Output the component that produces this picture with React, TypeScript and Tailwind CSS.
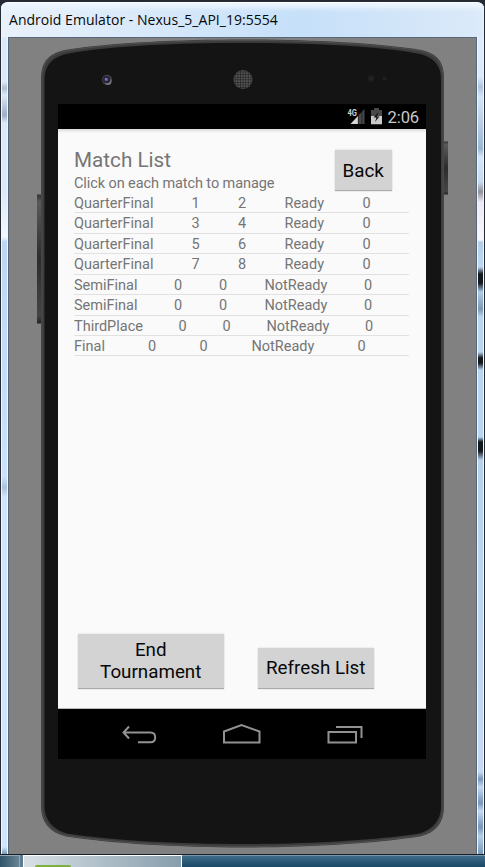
import React from "react";

type Match = { cells: string[]; widths: string[] };

const quarter = ["w-[117.5px]", "w-[46.5px]", "w-[46.5px]", "w-[78px]", "w-[12px]"];
const semi = ["w-[100px]", "w-[45px]", "w-[45.5px]", "w-[99.5px]", "w-[12px]"];
const third = ["w-[104.5px]", "w-[44px]", "w-[44px]", "w-[98.500px]", "w-[12px]"];
const final = ["w-[74px]", "w-[51.5px]", "w-[52px]", "w-[106px]", "w-[12px]"];

const matches: Match[] = [
  { cells: ["QuarterFinal", "1", "2", "Ready", "0"], widths: quarter },
  { cells: ["QuarterFinal", "3", "4", "Ready", "0"], widths: quarter },
  { cells: ["QuarterFinal", "5", "6", "Ready", "0"], widths: quarter },
  { cells: ["QuarterFinal", "7", "8", "Ready", "0"], widths: quarter },
  { cells: ["SemiFinal", "0", "0", "NotReady", "0"], widths: semi },
  { cells: ["SemiFinal", "0", "0", "NotReady", "0"], widths: semi },
  { cells: ["ThirdPlace", "0", "0", "NotReady", "0"], widths: third },
  { cells: ["Final", "0", "0", "NotReady", "0"], widths: final },
];

function PhoneBody() {
  return (
    <svg className="absolute inset-0 h-full w-full" viewBox="8 37 469 817">
      <defs>
        <linearGradient id="key" x1="0" y1="0" x2="0" y2="1">
          <stop offset="0" stopColor="#333" />
          <stop offset="0.06" stopColor="#5a5a5a" />
          <stop offset="0.5" stopColor="#2c2c2c" />
          <stop offset="0.94" stopColor="#454545" />
          <stop offset="1" stopColor="#222" />
        </linearGradient>
        <pattern id="mesh" width="2.6" height="2.6" patternUnits="userSpaceOnUse">
          <rect width="2.6" height="2.6" fill="#555" />
          <circle cx="1.3" cy="1.3" r="0.9" fill="#151515" />
        </pattern>
      </defs>
      <rect x="37" y="194" width="5" height="129" fill="url(#key)" />
      <rect x="443" y="141" width="5" height="53" fill="url(#key)" />
      <path
        d="M41 78 C41 60 50 52 68 49 C112 42 180 39 243 39 C306 39 374 42 418 49 C436 52 444 60 444 78 V806 C444 822 436 832 420 836 C374 843 306 847 243 847 C180 847 112 843 66 836 C50 832 41 822 41 806 Z"
        fill="#3b3b3b"
      />
      <path
        d="M42 78 C42 61 51 53.500 68 50 C112 43 180 40 243 40 C306 40 374 43 418 50 C435 53.500 443 61 443 78 V806 C443 821 435 831 420 835 C374 842 306 846 243 846 C180 846 112 842 66 835 C51 831 42 821 42 806 Z"
        fill="none"
        stroke="#505050"
        strokeWidth="1"
      />
      <path
        d="M44.500 79 C44.500 64 53 56 69 53 C112 45 180 42.500 243 42.500 C306 42.500 374 45 417 53 C433 56 441 64 441 79 V806 C441 819 433 829 419 833 C374 840 306 843.500 243 843.500 C180 843.500 112 840 67 833 C53 829 44.500 819 44.500 806 Z"
        fill="#141414"
      />
      <circle cx="107" cy="79.300" r="5" fill="#48484d" />
      <circle cx="108" cy="81" r="3.500" fill="#75757a" />
      <circle cx="106.600" cy="79" r="3.800" fill="#26243a" />
      <circle cx="106.300" cy="79" r="1.700" fill="#5d5b94" />
      <circle cx="106" cy="78.500" r=".7" fill="#aaa8d0" />
      <circle cx="243" cy="79" r="9.500" fill="url(#mesh)" />
      <circle cx="371" cy="78" r="3.500" fill="#1d1d1d" />
      <circle cx="371" cy="78" r="1.500" fill="#252525" />
      <circle cx="384.500" cy="78" r="2" fill="#202020" />
    </svg>
  );
}

function StatusBar() {
  return (
    <div className="flex h-[25px] items-center justify-end bg-black pr-[6.5px]">
      <svg className="h-[25px] w-[38px]" viewBox="346 104 38 25">
        <path d="M350.500 124 L364.500 109 V124 Z" fill="#484848" />
        <path d="M350.500 124 L358 116 V124 Z" fill="#d5d5d5" />
        <path d="M358.300 112 V124 M362 110 V124" stroke="#171717" strokeWidth=".7" />
        <text x="347.500" y="115.700" fontSize="9.500" fontWeight="700" fill="#d0d0d0" stroke="#000" strokeWidth="1.2" paintOrder="stroke" fontFamily="Roboto, sans-serif" textLength="9.500" lengthAdjust="spacingAndGlyphs">4G</text>
        <path d="M371 110 H374 V108 H379 V110 H382 V124.200 H371 Z" fill="#484848" />
        <rect x="371" y="116" width="11" height="8.200" fill="#c9c9c9" />
        <path d="M378.500 112 L373.500 117.500 H376.500 L375 122 L379.500 116.500 H377 Z" fill="#151515" />
      </svg>
      <span className="ml-[4px] w-[32px] pt-[2px] text-[16.6px] leading-[25px] tracking-[-0.1px] text-[#c8c8c8]">2:06</span>
    </div>
  );
}

function MatchList() {
  return (
    <div className="flex w-[335px] flex-col">
      {matches.map((m, i) => (
        <div key={i} className="flex h-[20.43px] border-b border-[#e1e1e1] text-[14.5px] leading-[21px] whitespace-nowrap">
          {m.cells.map((c, j) => (
            <span key={j} className={"shrink-0 " + m.widths[j]}>{c}</span>
          ))}
        </div>
      ))}
    </div>
  );
}

const buttonStyle = "bg-[#d3d3d3] pt-[2px] text-center text-[18.8px] text-[#080808] shadow-[0_1px_1px_#aaa,0_-1px_1px_#eee]";

function NavBar() {
  return (
    <div className="flex h-[50px] bg-black">
      <svg className="h-full w-full" viewBox="58 709 368 50" fill="none" stroke="#929292" strokeWidth="2">
        <path d="M129 726.500 L123.500 732.500 L129 738.500 M124 732.500 H150.500 Q155.200 732.500 155.200 737.500 Q155.200 742.300 150.500 742.300 H138" />
        <path d="M224 742.500 V731.500 L241.500 725 L259.500 731.500 V742.500 Z" />
        <path d="M328.500 732 H356 V742.500 H328.500 Z M336 727 H361.500 V738" />
      </svg>
    </div>
  );
}

function Screen() {
  return (
    <div className="relative mt-[67px] ml-[50px] flex h-[655px] w-[368px] flex-col bg-[#fafafa] font-[Roboto,sans-serif] text-[#757575]">
      <StatusBar />
      <div className="flex h-[580px] flex-col border-b border-[#bbb] bg-linear-to-b from-[#dcdcdc] to-[#fafafa] to-[4px] pl-4">
        <div className="flex h-[64px]">
          <div className="w-[260.5px] pt-[19px]">
            <h1 className="text-[20.7px] leading-[24px]">Match List</h1>
            <p className="pt-px text-[14.5px] leading-[21px] tracking-[-0.09px] whitespace-nowrap">Click on each match to manage</p>
          </div>
          <button className={"mt-[21px] h-[40px] w-[57.5px] " + buttonStyle}>Back</button>
        </div>
        <MatchList />
        <div className="mt-auto mb-[20.5px] flex items-end pl-1">
          <button className={"h-[54px] w-[145.5px] px-5 leading-[21.7px] " + buttonStyle}>End Tournament</button>
          <button className={"ml-[34.5px] h-[40px] w-[115.5px] whitespace-nowrap " + buttonStyle}>Refresh List</button>
        </div>
      </div>
      <NavBar />
    </div>
  );
}

export default function App() {
  return (
    <div className="flex h-[867px] w-[485px] flex-col overflow-hidden bg-[#252b35]">
      <div className="flex h-[854px] flex-col overflow-hidden rounded-t-[8px] border-x border-t-2 border-[#252b35] bg-[#c7ddf5]">
        <header className="h-[35px] shrink-0 rounded-t-[6px] border-t border-white bg-linear-to-r from-[#e9f1fa] via-[#c6e0f9] via-[62%] to-[#dceaf9] pl-[8px] font-['Open_Sans','Noto_Sans',sans-serif] text-[14px] leading-[33px] tracking-[0.03px] whitespace-nowrap text-[#080808] shadow-[inset_0_5px_5px_#edf6ff]">
          Android Emulator - Nexus_5_API_19:5554
        </header>
        <main className="flex min-h-0 flex-1">
          <div className="w-[7px] shrink-0 border-x border-[#edf7ff] bg-[linear-gradient(#dce9f8_0,#dce9f8_45px,#aebfd4_51px,#dce9f8_58px,#9eaec4_78px,#dce9f8_86px,#dce9f8_155px,#f5f7fc_200px,#bcd6f3_205px,#cde2fa_440px,#acc2dc_450px,#d0e4fa_460px,#d0e4fa_810px,#7699b5_817px)]" />
          <div className="relative w-[469px] shrink-0 border-t border-l border-r border-[#56677a] bg-[#818181]">
            <div className="absolute -inset-px"><PhoneBody /></div>
            <div className="-mt-px -ml-px"><Screen /></div>
          </div>
          <div className="w-[7px] shrink-0 border-x border-[#edf7ff] bg-[linear-gradient(#deebfa_0,#dce9f8_40px,#acc4df_50px,#d4e5f7_60px,#9db7d3_112px,#d5e6fa_120px,#c7d9ef_145px,#909198_155px,#eceaf4_165px,#f6f7fb_203px,#b5cee8_205px,#bdd7f2_230px,#14191e_237px,#14191e_246px,#aecbe9_255px,#8199b0_272px,#bcd5ef_280px,#bcd5ef_315px,#12171c_321px,#12171c_326px,#bad5f0_333px,#bad5f0_400px,#12171c_405px,#12171c_414px,#b8d1eb_423px,#c5daf2_735px,#7895b8_742px,#c5daf2_750px,#7895b8_766px,#c5daf2_774px,#7895b8_790px,#b6cee8_799px,#7699b5_817px)]" />
        </main>
      </div>
      <footer className="flex h-[13px] border-t border-[#161f28] bg-linear-to-r from-[#66818f] via-[#265a7c] via-[40%] to-[#1d4b6c]">
        <div className="w-[20px] border-t border-r border-[#95a8b4] bg-linear-to-r from-[#315468] to-[#668594]" />
        <div className="ml-[3px] h-[12px] w-[159px] overflow-hidden border-t border-l border-r border-white bg-linear-to-r from-[#d8e0e5] to-[#879eac] pl-[11px]">
          <div className="mt-[9px] h-[5px] w-[36px] rounded-t-[2px] bg-[#7eb040]" />
        </div>
        <div className="flex-1 border-t border-[#7896a9] bg-linear-to-b from-[#3e6b88] to-[#194968]" />
      </footer>
    </div>
  );
}
